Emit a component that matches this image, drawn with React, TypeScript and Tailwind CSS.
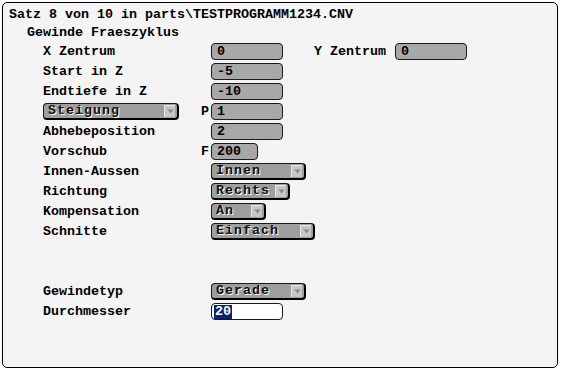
import React from "react";

const font = "font-['Liberation_Mono',monospace] font-bold text-[13.33px]";

function Field({ w, value, white }: { w: string; value: string; white?: boolean }) {
  if (white) {
    return (
      <div className={`${w} h-[17px] rounded-[4px] border border-[#1a1a1a] bg-white flex items-center pl-[2px]`}>
        <span className="bg-[#0a246a] text-white leading-[14px] px-[1px]">{value}</span>
      </div>
    );
  }
  return (
    <div className={`${w} h-[17px] rounded-[4px] border border-[#1a1a1a] bg-[#a8a8a8] flex items-center pl-[5px] leading-[15px] text-black`}>
      {value}
    </div>
  );
}

function Dropdown({ w, value }: { w: string; value: string }) {
  return (
    <div
      className={`${w} h-[17px] rounded-[4px] border border-[#1a1a1a] border-r-2 border-b-2 border-r-black border-b-black bg-[#9e9e9e] flex items-center justify-between pl-[4px] pr-[2px]`}
    >
      <span className="tracking-[1px] leading-[14px] text-[#111] [text-shadow:1px_1px_0_#fff]">{value}</span>
      <div className="w-[11px] h-[12px] bg-[#c6c6c6] border-l border-t border-[#e8e8e8] flex items-center justify-center">
        <svg width="7" height="5" viewBox="0 0 7 5">
          <path d="M0.5 0.5 L6.5 0.5 L3.5 4.5 Z" fill="#8a8a8a" />
        </svg>
      </div>
    </div>
  );
}

function Row({ label, prefix, children }: { label?: React.ReactNode; prefix?: string; children?: React.ReactNode }) {
  return (
    <div className="h-[20px] flex items-start pt-[1px]">
      <div className="w-[158px] h-[17px] flex items-center leading-[17px]">{label}</div>
      <div className="w-[10px] h-[17px] flex items-center leading-[17px]">{prefix}</div>
      {children}
    </div>
  );
}

export default function App() {
  return (
    <div className={`w-[561px] h-[371px] bg-white p-[2px] ${font} text-black`}>
      <div className="w-[556px] h-[366px] border border-black rounded-[5px] bg-[#f4f4f4] pt-[4px]">
        <div className="h-[16px] leading-[16px] pl-[6px]">Satz 8 von 10 in parts\TESTPROGRAMM1234.CNV</div>
        <div className="mt-[2px] h-[17px] leading-[16px] pl-[24px]">Gewinde Fraeszyklus</div>
        <div className="pl-[40px] flex flex-col">
          <Row label="X Zentrum">
            <Field w="w-[72px]" value="0" />
            <div className="ml-[31px] w-[81px] h-[17px] leading-[17px]">Y Zentrum</div>
            <Field w="w-[72px]" value="0" />
          </Row>
          <Row label="Start in Z">
            <Field w="w-[72px]" value="-5" />
          </Row>
          <Row label="Endtiefe in Z">
            <Field w="w-[72px]" value="-10" />
          </Row>
          <Row label={<Dropdown w="w-[136px]" value="Steigung" />} prefix="P">
            <Field w="w-[72px]" value="1" />
          </Row>
          <Row label="Abhebeposition">
            <Field w="w-[72px]" value="2" />
          </Row>
          <Row label="Vorschub" prefix="F">
            <Field w="w-[47px]" value="200" />
          </Row>
          <Row label="Innen-Aussen">
            <Dropdown w="w-[95px]" value="Innen" />
          </Row>
          <Row label="Richtung">
            <Dropdown w="w-[79px]" value="Rechts" />
          </Row>
          <Row label="Kompensation">
            <Dropdown w="w-[55px]" value="An" />
          </Row>
          <Row label="Schnitte">
            <Dropdown w="w-[104px]" value="Einfach" />
          </Row>
          <Row />
          <Row />
          <Row label="Gewindetyp">
            <Dropdown w="w-[95px]" value="Gerade" />
          </Row>
          <Row label="Durchmesser">
            <Field w="w-[72px]" value="20" white />
          </Row>
        </div>
      </div>
    </div>
  );
}
